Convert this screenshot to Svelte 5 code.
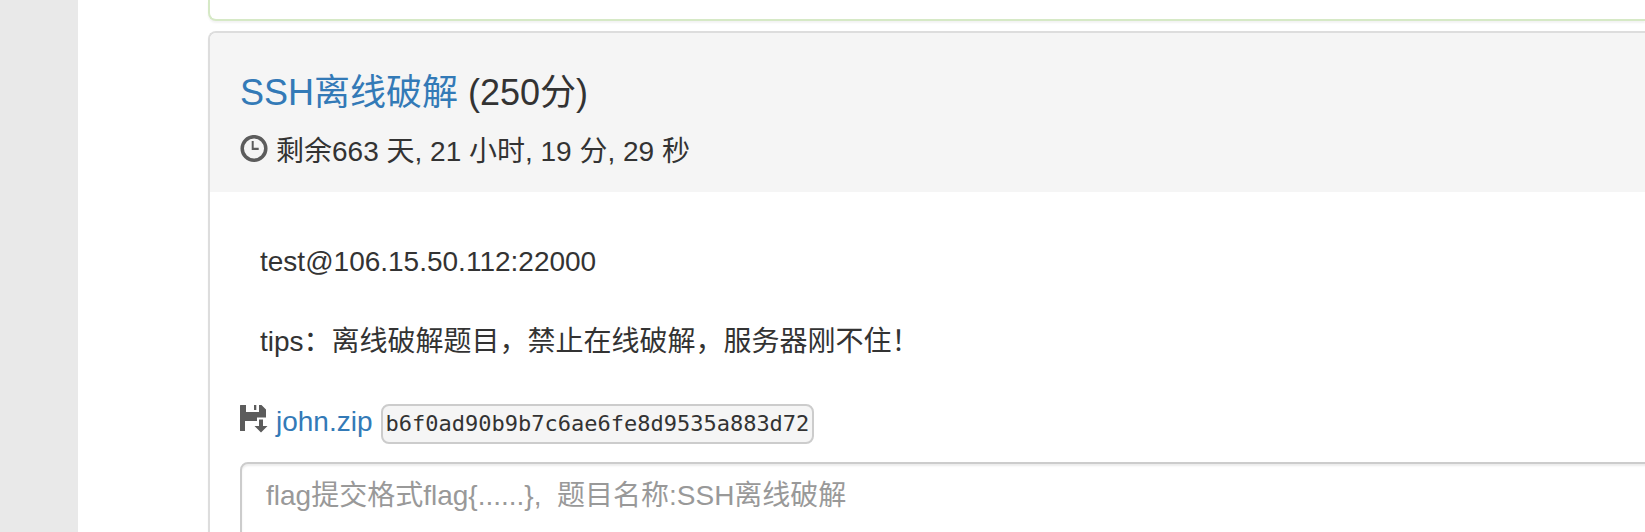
<script>
  const challenge = {
    title: 'SSH离线破解',
    score: 250,
    remaining: '剩余663 天, 21 小时, 19 分, 29 秒',
    lines: ['test@106.15.50.112:22000', 'tips：离线破解题目，禁止在线破解，服务器刚不住！'],
    file: 'john.zip',
    hash: 'b6f0ad90b9b7c6ae6fe8d9535a883d72',
  };
</script>

<div class="page">
  <main>
    <section class="panel solved" aria-hidden="true"></section>
    <section class="panel">
      <header>
        <h3><a href="#challenge">{challenge.title}</a> ({challenge.score}分)</h3>
        <div class="row">
          <svg class="icon" viewBox="0 0 28 28" aria-hidden="true">
            <circle cx="14" cy="13.5" r="11.8" fill="none" stroke="currentColor" stroke-width="3.5" />
            <path d="M11.700 6h2v6.800h5v2.200h-7z" fill="currentColor" />
          </svg>
          <span>{challenge.remaining}</span>
        </div>
      </header>
      <div class="body">
        <div class="description">
          {#each challenge.lines as line}
            <p>{line}</p>
          {/each}
        </div>
        <div class="row">
          <svg class="icon" viewBox="0 0 28 28" aria-hidden="true">
            <path
              d="M0 .5q0-.5.5-.5H6v7h13V0h2.500L26 4.500V12.500h-9V16H5v10H.5q-.5 0-.5-.5zM14 0h2.300v5H14z"
              fill="currentColor"
            />
            <path d="M19 14.500h4v6.500h4.500L21 27.500 14.500 21H19z" fill="currentColor" />
          </svg>
          <a href="#download">{challenge.file}</a>
          <code>{challenge.hash}</code>
        </div>
        <textarea
          rows="2"
          aria-label="flag"
          placeholder={'flag提交格式flag{......},\u00a0\u00a0题目名称:' + challenge.title}
        ></textarea>
      </div>
    </section>
  </main>
</div>

<style>
  :global(body) {
    margin: 0;
    background: #e9e9e9;
  }
  .page {
    box-sizing: border-box;
    height: 100vh;
    overflow: hidden;
    padding-left: 78px;
    font-family: 'Liberation Sans', 'Noto Sans CJK SC', sans-serif;
    font-size: 28px;
    line-height: 40px;
    color: #333;
  }
  main {
    min-height: 100%;
    box-sizing: border-box;
    padding-left: 130px;
    background: #fff;
  }
  .panel {
    border: 2px solid #ddd;
    border-right: 0;
    border-radius: 8px 0 0 8px;
    background: #fff;
    box-shadow: 0 2px 2px rgba(0, 0, 0, 0.05);
    overflow: hidden;
  }
  .solved {
    height: 19px;
    margin-bottom: 10px;
    border-top: 0;
    border-color: #d6e9c6;
    border-radius: 0 0 0 8px;
  }
  header {
    padding: 40px 30px 20px;
    background: #f5f5f5;
  }
  h3 {
    margin: 0 0 20px;
    font-size: 36px;
    font-weight: 400;
    line-height: 39px;
  }
  a {
    color: #337ab7;
    text-decoration: none;
  }
  .row {
    display: flex;
    align-items: center;
    gap: 8px;
    height: 40px;
  }
  .icon {
    flex: none;
    width: 28px;
    height: 28px;
    margin-bottom: 6px;
    color: #5c5c5c;
  }
  .body {
    padding: 50px 30px 30px;
  }
  .description {
    padding-left: 20px;
  }
  p {
    margin: 0 0 40px;
  }
  code {
    box-sizing: border-box;
    height: 40px;
    margin-top: 4px;
    padding: 0 3px;
    border: 2px solid #ccc;
    border-radius: 8px;
    background: #f5f5f5;
    font-family: 'DejaVu Sans Mono', monospace;
    font-size: 22px;
    line-height: 36px;
  }
  textarea {
    display: block;
    box-sizing: border-box;
    width: calc(100% + 34px);
    margin-top: 20px;
    padding: 12px 24px;
    border: 2px solid #ccc;
    border-radius: 8px 0 0 8px;
    box-shadow: inset 0 2px 2px rgba(0, 0, 0, 0.075);
    background: #fff;
    color: #555;
    font: inherit;
    resize: none;
  }
  textarea::placeholder {
    color: #999;
    opacity: 1;
  }
</style>
